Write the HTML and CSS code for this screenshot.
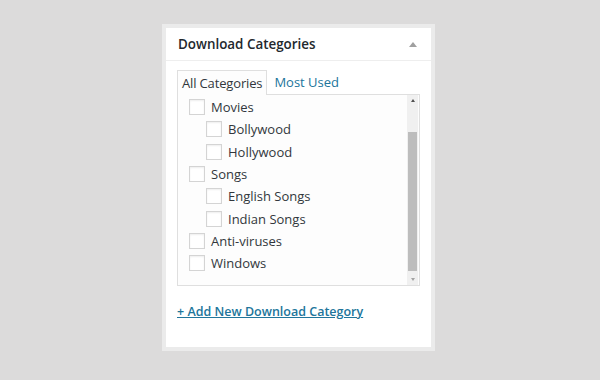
FILE: index.html
```html
<!DOCTYPE html>
<html>
<head>
<meta charset="utf-8">
<link rel="stylesheet" href="styles.css">
</head>
<body>
<div class="frame">
  <div class="box">
    <div class="hdr">
      <h2 class="title">Download Categories</h2>
      <span class="toggle"></span>
    </div>
    <div class="inside">
      <ul class="tabs">
        <li class="tab active">All Categories</li>
        <li class="tab link">Most Used</li>
      </ul>
      <div class="panel">
        <ul class="list">
          <li class="item"><span class="cb"></span>Movies</li>
          <li class="item child"><span class="cb"></span>Bollywood</li>
          <li class="item child"><span class="cb"></span>Hollywood</li>
          <li class="item"><span class="cb"></span>Songs</li>
          <li class="item child"><span class="cb"></span>English Songs</li>
          <li class="item child"><span class="cb"></span>Indian Songs</li>
          <li class="item"><span class="cb"></span>Anti-viruses</li>
          <li class="item"><span class="cb"></span>Windows</li>
        </ul>
        <div class="sbar">
          <span class="arr up"></span>
          <div class="track"><div class="thumb"></div></div>
          <span class="arr down"></span>
        </div>
      </div>
      <a class="add" href="#">+ Add New Download Category</a>
    </div>
  </div>
</div>
</body>
</html>
```
FILE: styles.css
```css
* { box-sizing: border-box; }
html, body { margin: 0; padding: 0; }
body {
  background: #dcdbdb;
  width: 600px;
  height: 380px;
  font-family: "Open Sans", "Noto Sans", sans-serif;
  color: #444;
}
.frame {
  margin: 24px 0 0 162px;
  width: 273px;
  height: 327px;
  border: 4px solid #ebebeb;
  background: #fff;
}
.hdr {
  height: 33px;
  border-bottom: 1px solid #eeeeee;
  display: flex;
  align-items: center;
  justify-content: space-between;
  padding: 0 14px 0 12px;
}
.title {
  margin: 0;
  font-size: 13.4px;
  font-weight: 600;
  color: #23282d;
  line-height: 1;
  padding-top: 1px;
}
.toggle {
  width: 0; height: 0;
  border-left: 4px solid transparent;
  border-right: 4px solid transparent;
  border-bottom: 5px solid #a0a0a0;
}
.inside {
  padding: 8px 11px 0 11px;
}
.tabs {
  list-style: none;
  margin: 0;
  padding: 0;
  display: flex;
  height: 25px;
  font-size: 13px;
}
.tab {
  padding: 3px 4px 0 4px;
  line-height: 19px;
  border: 1px solid transparent;
  border-bottom: none;
}
.tab.active {
  border-color: #dfdfdf;
  background: #fdfdfd;
  color: #32373c;
  position: relative;
  top: 1px;
  letter-spacing: -0.15px;
}
.tab.link { color: #21759b; padding-left: 6px; }
.panel {
  width: 243px;
  height: 192px;
  border: 1px solid #dfdfdf;
  background: #fdfdfd;
  display: flex;
}
.list {
  list-style: none;
  margin: 0;
  padding: 1px 0 0 11px;
  flex: 1;
  font-size: 13px;
  color: #32373c;
}
.item {
  display: flex;
  align-items: center;
  height: 22.3px;
}
.item.child { padding-left: 17px; }
.cb {
  width: 16px;
  height: 16px;
  border: 1px solid #d4d4d4;
  background: #fff;
  margin-right: 6px;
  box-shadow: inset 0 1px 2px rgba(0,0,0,0.07);
}
.sbar {
  width: 11px;
  margin: 0 1px 0 0;
  display: flex;
  flex-direction: column;
  background: #f0f0f0;
}
.arr {
  height: 11px;
  display: flex;
  align-items: center;
  justify-content: center;
}
.arr.up::before {
  content: "";
  border-left: 2.5px solid transparent;
  border-right: 2.5px solid transparent;
  border-bottom: 3px solid #505050;
}
.arr.down::before {
  content: "";
  border-left: 2.5px solid transparent;
  border-right: 2.5px solid transparent;
  border-top: 3px solid #a3a3a3;
}
.track {
  flex: 1;
  padding: 26px 1px 3px 1px;
}
.thumb {
  height: 100%;
  background: #bdbdbd;
}
.add {
  display: inline-block;
  margin-top: 17px;
  font-size: 12.5px;
  color: #21759b;
  text-decoration: underline;
  font-weight: 600;
}
```
